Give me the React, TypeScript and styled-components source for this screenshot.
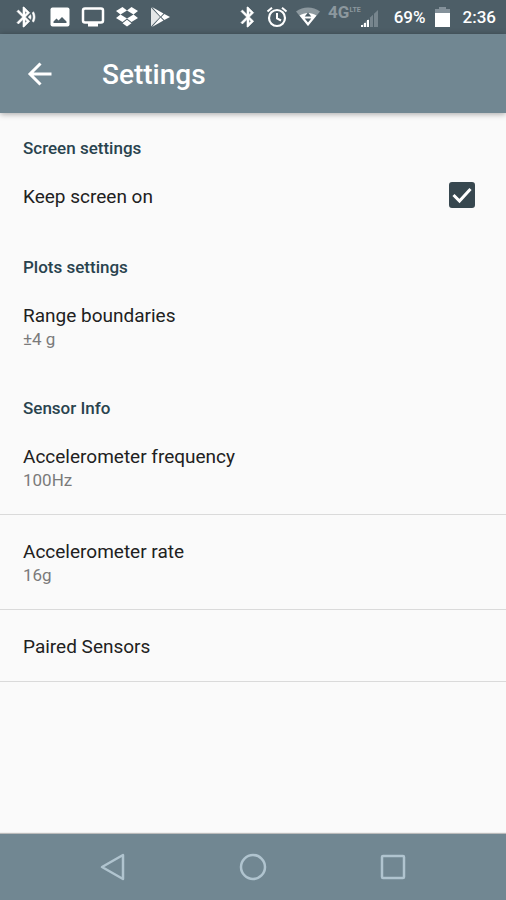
import React from "react";
import styled, { createGlobalStyle } from "styled-components";

const GlobalStyle = createGlobalStyle`
  *, *::before, *::after { box-sizing: border-box; }
  body { margin: 0; background: #fafafa; font-family: Roboto, "Liberation Sans", sans-serif; }
`;

const Screen = styled.div`
  display: flex;
  flex-direction: column;
  min-height: 100vh;
`;

const StatusBar = styled.div`
  display: flex;
  align-items: center;
  justify-content: space-between;
  height: 34px;
  padding: 0 10px 0 15px;
  background: #4d5e67;
  color: #fff;
  font-size: 17px;
  font-weight: 500;
`;

const StatusGroup = styled.div<{ $gap: number }>`
  display: flex;
  align-items: center;
  gap: ${(p) => p.$gap}px;
`;

const Glyph = styled.svg`
  display: block;
  flex: none;
`;

const Network = styled.div`
  display: flex;
  align-items: flex-start;
  height: 26px;
  color: #8c989e;
`;

const Generation = styled.span`
  font-size: 17px;
  line-height: 16px;
  font-weight: 700;
`;

const Lte = styled.span`
  font-size: 7px;
  line-height: 8px;
  font-weight: 700;
  padding-top: 2px;
`;

const AppBar = styled.header`
  display: flex;
  align-items: center;
  gap: 46px;
  height: 79px;
  padding: 2px 24px 0;
  background: #718792;
  color: #fff;
  box-shadow: 0 1px 6px rgba(0, 0, 0, 0.35);
`;

const IconButton = styled.button`
  display: grid;
  place-items: center;
  padding: 0;
  border: 0;
  background: none;
  color: inherit;
  cursor: pointer;
`;

const Title = styled.h1`
  margin: 0;
  font-size: 28px;
  line-height: 32px;
  font-weight: 500;
`;

const Content = styled.main`
  flex: 1;
`;

const Category = styled.h2`
  margin: 0;
  padding: 23px 23px 0;
  font-size: 17px;
  line-height: 24px;
  font-weight: 500;
  color: #29434e;
`;

const Row = styled.div<{ $divided?: boolean }>`
  display: flex;
  align-items: flex-start;
  justify-content: space-between;
  min-height: 72px;
  padding: 25px 31px 22px 23px;
  border-bottom: ${(p) => (p.$divided ? "1px solid #dadada" : "none")};
`;

const RowTitle = styled.div`
  font-size: 19px;
  line-height: 24px;
  color: #212121;
`;

const RowValue = styled.div`
  font-size: 17px;
  line-height: 23px;
  color: #7a7a7a;
`;

const Check = styled.input`
  appearance: none;
  width: 26px;
  height: 26px;
  margin: -3px 0 0;
  border: 2px solid #37474f;
  border-radius: 3px;

  &:checked {
    background: #37474f url("data:image/svg+xml,%3Csvg xmlns='http://www.w3.org/2000/svg' viewBox='0 0 22 22'%3E%3Cpath d='M2.5 11l6 6L19.500 5' fill='none' stroke='white' stroke-width='3'/%3E%3C/svg%3E") center / 22px no-repeat;
  }
`;

const NavBar = styled.nav`
  display: grid;
  grid-template-columns: repeat(3, 1fr);
  align-items: center;
  height: 66px;
  padding: 0 43px;
  background: #718792;
  color: #b0c4cf;
  box-shadow: 0 -1px 1px rgba(0, 0, 0, 0.25);
`;

type SettingProps = { title: string; value?: string; divided?: boolean };

const Setting = ({ title, value, divided }: SettingProps) => (
  <Row $divided={divided}>
    <div>
      <RowTitle>{title}</RowTitle>
      {value && <RowValue>{value}</RowValue>}
    </div>
  </Row>
);

const bluetooth =
  "M17.710 7.710L12 2h-1v7.590L6.410 5 5 6.410 10.590 12 5 17.590 6.410 19 11 14.410V22h1l5.710-5.710-4.300-4.290 4.300-4.290zM13 5.830l1.880 1.880L13 9.590V5.830zm1.880 10.460L13 18.170v-3.760l1.880 1.880z";

export default function App() {
  return (
    <>
      <GlobalStyle />
      <Screen>
        <StatusBar>
          <StatusGroup $gap={11}>
            <Glyph width="24" height="22" viewBox="1 1 24 22" fill="currentColor" stroke="currentColor" strokeWidth="0.6">
              <path d="M14.240 12.010l2.320 2.320c.28-.72.440-1.510.440-2.330 0-.82-.16-1.590-.43-2.310l-2.330 2.320zm5.290-5.300l-1.260 1.260c.63 1.210.98 2.570.98 4.020s-.36 2.820-.98 4.020l1.200 1.200c.97-1.540 1.540-3.360 1.540-5.310-.01-1.890-.55-3.670-1.480-5.190zm-3.820 1L10 2H9v7.590L4.410 5 3 6.410 8.590 12 3 17.590 4.410 19 9 14.410V22h1l5.710-5.710-4.300-4.290 4.300-4.290zM11 5.830l1.880 1.880L11 9.590V5.830zm1.880 10.460L11 18.170v-3.760l1.880 1.880z" />
            </Glyph>
            <Glyph width="20" height="20" viewBox="0 0 20 20">
              <rect x="0.500" y="0.500" width="19" height="19" rx="2" fill="currentColor" />
              <path d="M3.500 16v-1.500l3-3 2 2 3.500-3.500 4.500 4.500V16z" fill="#4d5e67" />
            </Glyph>
            <Glyph width="24" height="20" viewBox="0 0 24 20">
              <rect x="2" y="1.500" width="20" height="14" rx="2" fill="none" stroke="currentColor" strokeWidth="2.500" />
              <path d="M7 16h10v3.500H7z" fill="currentColor" />
            </Glyph>
            <Glyph width="22" height="20" viewBox="0 0 22 20" fill="currentColor">
              <path d="M6.500 0L11 3.500 4.500 7.500 0 4zM15.500 0L22 4l-4.500 3.500L11 3.500zM0 11l4.500-3.500 6.500 4L6.500 15zM17.500 7.500L22 11l-6.500 4-4.500-3.500zM6.500 16.200L11 12.700l4.500 3.500L11 19.500z" />
            </Glyph>
            <Glyph width="22" height="20" viewBox="0 0 22 20" fill="currentColor">
              <path d="M2 0.500v19L11 10z" opacity="0.850" />
              <path d="M3 0l11.500 6.500-3 3zM3 20l11.500-6.500-3-3zM15.300 7L21 10l-5.700 3-3-3z" />
            </Glyph>
          </StatusGroup>
          <StatusGroup $gap={13}>
            <StatusGroup $gap={8}>
              <Glyph width="18" height="22" viewBox="4 1 18 22" fill="currentColor" stroke="currentColor" strokeWidth="0.600">
                <path d={bluetooth} />
              </Glyph>
              <Glyph width="22" height="22" viewBox="0 0 22 22" fill="none" stroke="currentColor" strokeWidth="2.200">
                <circle cx="11" cy="12" r="8" />
                <path d="M11 7v5.500l4 2M1.500 5.500L6 1.700M20.500 5.500L16 1.700" strokeWidth="2" />
              </Glyph>
              <Glyph width="24" height="20" viewBox="0 0 24 20">
                <path d="M0 4.500C7-1 17-1 24 4.500L12 19z" fill="#8c989e" />
                <path d="M3.500 8.500c5-3.500 12-3.500 17 0L12 19z" fill="currentColor" />
                <path d="M12 5.500l3.300 4H8.700zM8.700 11.500h6.600L12 15.500z" fill="#4d5e67" />
              </Glyph>
              <StatusGroup $gap={0}>
                <Network>
                  <Generation>4G</Generation>
                  <Lte>LTE</Lte>
                </Network>
                <Glyph width="20" height="24" viewBox="0 0 20 24">
                  <path d="M0 21L17 5v17H0z" fill="#77858d" />
                  <path d="M0 20h2v2H0zM3 18h2v4H3zM6 15h2v7H6z" fill="currentColor" />
                  <path d="M8 13h1v9H8zM12 9h1v13h-1z" fill="#4d5e67" />
                </Glyph>
              </StatusGroup>
            </StatusGroup>
            <StatusGroup $gap={9}>
              <span>69%</span>
              <Glyph width="15" height="20" viewBox="0 0 15 20">
                <path d="M4 0h7v2h4v5H0V2h4z" fill="#84919a" />
                <path d="M0 6h15v14H0z" fill="currentColor" />
              </Glyph>
            </StatusGroup>
            <span>2:36</span>
          </StatusGroup>
        </StatusBar>
        <AppBar>
          <IconButton aria-label="Back">
            <Glyph width="32" height="32" viewBox="0 0 32 32" fill="none" stroke="currentColor" strokeWidth="3">
              <path d="M27.500 15H6.500M16.500 4.500L6 15l10.500 10.500" />
            </Glyph>
          </IconButton>
          <Title>Settings</Title>
        </AppBar>
        <Content>
          <section>
            <Category>Screen settings</Category>
            <Row>
              <RowTitle as="label" htmlFor="keep-on">Keep screen on</RowTitle>
              <Check id="keep-on" type="checkbox" defaultChecked />
            </Row>
          </section>
          <section>
            <Category>Plots settings</Category>
            <Setting title="Range boundaries" value="±4 g" />
          </section>
          <section>
            <Category>Sensor Info</Category>
            <Setting title="Accelerometer frequency" value="100Hz" divided />
            <Setting title="Accelerometer rate" value="16g" divided />
            <Setting title="Paired Sensors" divided />
          </section>
        </Content>
        <NavBar>
          <IconButton aria-label="Navigate back">
            <Glyph width="28" height="28" viewBox="0 0 28 28" fill="none" stroke="currentColor" strokeWidth="2.500" strokeLinejoin="round">
              <path d="M24 2v24L3 14z" />
            </Glyph>
          </IconButton>
          <IconButton aria-label="Home">
            <Glyph width="28" height="28" viewBox="0 0 28 28" fill="none" stroke="currentColor" strokeWidth="2.500">
              <circle cx="14" cy="14" r="12" />
            </Glyph>
          </IconButton>
          <IconButton aria-label="Recent apps">
            <Glyph width="28" height="28" viewBox="0 0 28 28" fill="none" stroke="currentColor" strokeWidth="2.500">
              <rect x="3" y="3" width="22" height="22" rx="1" />
            </Glyph>
          </IconButton>
        </NavBar>
      </Screen>
    </>
  );
}
